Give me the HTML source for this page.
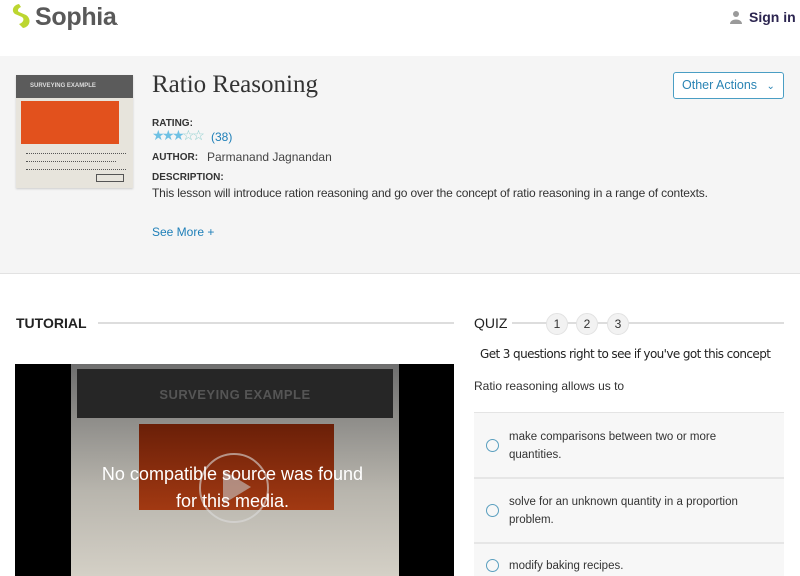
<!DOCTYPE html>
<html><head><meta charset="utf-8"><style>
*{margin:0;padding:0;box-sizing:border-box}
body{width:800px;height:576px;overflow:hidden;background:#fff;font-family:"Liberation Sans",sans-serif;position:relative;color:#333}
.abs{position:absolute}
</style></head><body>
<!-- header -->
<svg class="abs" style="left:10px;top:3px" width="22" height="26" viewBox="0 0 22 26"><path d="M9 1 C3 2 1 8 5 11 L12 14 C15 16 13 20 9 21 L13 25 C20 24 22 16 16 12 L9 9 C7 8 8 5 11 4 Z" fill="#bcd630"/></svg>
<div class="abs" style="left:35px;top:3px;font-size:25px;font-weight:bold;color:#595959;letter-spacing:-0.3px">Sophia<span style="font-size:6px">.</span></div>
<svg class="abs" style="left:729px;top:10px" width="14" height="14" viewBox="0 0 14 14"><circle cx="7" cy="4" r="3" fill="#9a9a9a"/><path d="M1 14 C1 8 13 8 13 14Z" fill="#9a9a9a"/></svg>
<div class="abs" style="left:749px;top:9px;font-size:14px;font-weight:bold;color:#2c2550">Sign in</div>
<!-- gray band -->
<div class="abs" style="left:0;top:56px;width:800px;height:218px;background:#f5f5f5;border-bottom:1px solid #e2e2e2"></div>
<div class="abs" style="left:16px;top:75px;width:117px;height:113px;background:#e7e4dc;box-shadow:0 1px 2px #ccc;overflow:hidden">
 <div style="height:23px;background:#5b5b5b;color:#ddd;font-size:6px;font-weight:bold;padding:8px 0 0 14px">SURVEYING EXAMPLE</div>
 <div style="margin:3px 0 0 5px;width:98px;height:43px;background:#e2511d"></div>
 <div class="abs" style="left:10px;top:78px;width:100px;height:1px;border-top:1px dotted #555"></div>
 <div class="abs" style="left:10px;top:86px;width:90px;height:1px;border-top:1px dotted #555"></div>
 <div class="abs" style="left:10px;top:94px;width:100px;height:1px;border-top:1px dotted #555"></div>
 <div class="abs" style="left:80px;top:99px;width:28px;height:8px;border:1px solid #555"></div>
</div>
<div class="abs" style="left:152px;top:71px;font-family:'Liberation Serif',serif;font-size:25px;color:#333">Ratio Reasoning</div>
<div class="abs" style="left:673px;top:72px;width:111px;height:27px;border:1px solid #4a9ec4;border-radius:3px;background:#fff;color:#2a84b4;font-size:12.5px;padding:5px 0 0 8px">Other Actions <span style="font-size:10px;margin-left:6px">&#8964;</span></div>
<div class="abs" style="left:152px;top:118px;font-size:10px;font-weight:bold;color:#333">RATING:</div>
<div class="abs" style="left:152px;top:127px;font-size:14px;color:#6ec1e4;letter-spacing:-2.5px">★★★<span style="color:#8cc">☆☆</span></div>
<div class="abs" style="left:211px;top:130px;font-size:12px;color:#1e7fb8">(38)</div>
<div class="abs" style="left:152px;top:152px;font-size:10px;font-weight:bold;color:#333">AUTHOR:</div>
<div class="abs" style="left:207px;top:150px;font-size:12px;color:#444">Parmanand Jagnandan</div>
<div class="abs" style="left:152px;top:172px;font-size:10px;font-weight:bold;color:#333">DESCRIPTION:</div>
<div class="abs" style="left:152px;top:186px;font-size:12px;color:#333;letter-spacing:-0.15px;white-space:nowrap">This lesson will introduce ration reasoning and go over the concept of ratio reasoning in a range of contexts.</div>
<div class="abs" style="left:152px;top:225px;font-size:12px;color:#1e7fb8">See More +</div>
<!-- tutorial -->
<div class="abs" style="left:16px;top:315px;font-size:14px;font-weight:bold;color:#222">TUTORIAL</div>
<div class="abs" style="left:98px;top:322px;width:356px;height:2px;background:#ddd"></div>
<div class="abs" style="left:15px;top:364px;width:439px;height:212px;background:#000;overflow:hidden">
 <div class="abs" style="left:56px;top:0;width:328px;height:212px;background:linear-gradient(#6e6e6e,#b8b5ad 60%,#d4d0c6)">
  <div class="abs" style="left:6px;top:5px;width:316px;height:49px;background:#262626;color:#555;font-size:13px;font-weight:bold;text-align:center;line-height:52px;letter-spacing:0.5px">SURVEYING EXAMPLE</div>
  <div class="abs" style="left:68px;top:60px;width:195px;height:86px;background:linear-gradient(#6a1f08,#a23912)"></div>
  <div class="abs" style="left:128px;top:89px;width:70px;height:70px;border:2px solid rgba(220,220,220,.6);border-radius:50%"></div>
  <svg class="abs" style="left:152px;top:106px" width="30" height="34"><path d="M0 0 L28 17 L0 34Z" fill="rgba(200,200,200,.6)"/></svg>
 </div>
 <div class="abs" style="left:-2px;top:97px;width:439px;text-align:center;color:#fff;font-size:18px;line-height:27px">No compatible source was found<br>for this media.</div>
</div>
<!-- quiz -->
<div class="abs" style="left:474px;top:315px;font-size:14px;color:#222">QUIZ</div>
<div class="abs" style="left:512px;top:322px;width:272px;height:2px;background:#ddd"></div>
<div class="abs" style="left:546px;top:313px;width:22px;height:22px;border-radius:50%;background:#f2f2f2;border:1px solid #e2e2e2;font-size:12px;text-align:center;line-height:20px">1</div>
<div class="abs" style="left:576px;top:313px;width:22px;height:22px;border-radius:50%;background:#f2f2f2;border:1px solid #e2e2e2;font-size:12px;text-align:center;line-height:20px">2</div>
<div class="abs" style="left:607px;top:313px;width:22px;height:22px;border-radius:50%;background:#f2f2f2;border:1px solid #e2e2e2;font-size:12px;text-align:center;line-height:20px">3</div>
<div class="abs" style="left:480px;top:347px;font-family:'Comic Sans MS','DejaVu Sans',sans-serif;font-size:12px;color:#222;letter-spacing:-0.6px">Get 3 questions right to see if you've got this concept</div>
<div class="abs" style="left:474px;top:379px;font-size:12px;color:#333">Ratio reasoning allows us to</div>
<div class="abs" style="left:474px;top:412px;width:310px;height:164px;background:#f7f7f7;border-top:1px solid #e4e4e4"></div>
<div class="abs" style="left:474px;top:477px;width:310px;height:2px;background:#e6e6e6"></div>
<div class="abs" style="left:474px;top:542px;width:310px;height:2px;background:#e6e6e6"></div>
<div class="abs" style="left:486px;top:439px;width:13px;height:13px;border:1.5px solid #5a9fbf;border-radius:50%"></div>
<div class="abs" style="left:486px;top:504px;width:13px;height:13px;border:1.5px solid #5a9fbf;border-radius:50%"></div>
<div class="abs" style="left:486px;top:559px;width:13px;height:13px;border:1.5px solid #5a9fbf;border-radius:50%"></div>
<div class="abs" style="left:509px;top:428px;font-size:11.5px;color:#333;line-height:18px">make comparisons between two or more<br>quantities.</div>
<div class="abs" style="left:509px;top:493px;font-size:11.5px;color:#333;line-height:18px">solve for an unknown quantity in a proportion<br>problem.</div>
<div class="abs" style="left:509px;top:557px;font-size:11.5px;color:#333;line-height:18px">modify baking recipes.</div>
</body></html>
